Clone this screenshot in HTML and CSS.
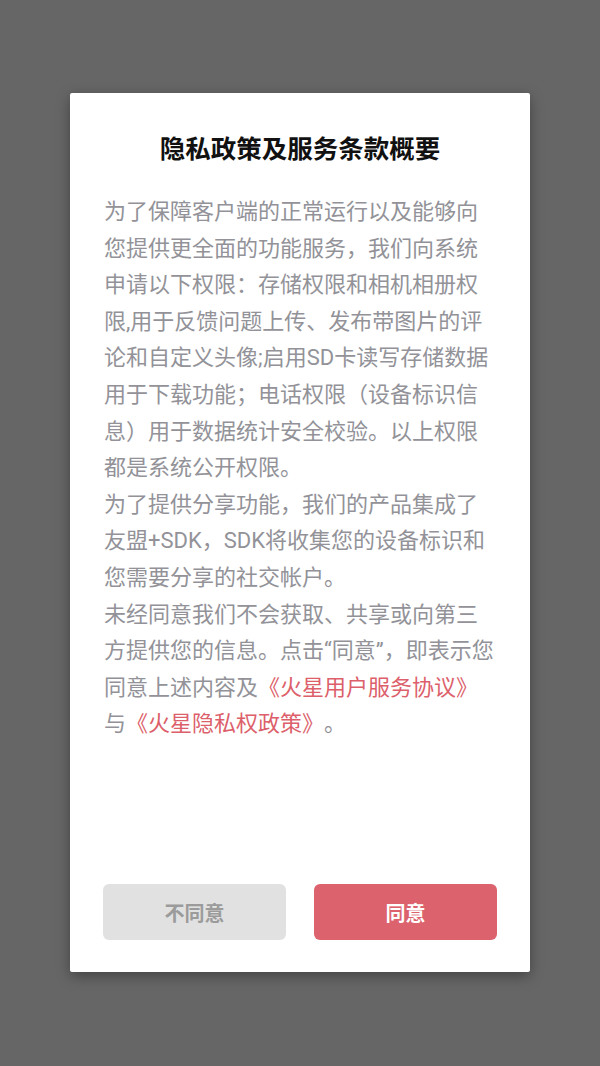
FILE: index.html
```html
<!DOCTYPE html>
<html lang="zh-CN">
<head>
<meta charset="utf-8">
<title>隐私政策及服务条款概要</title>
<link rel="stylesheet" href="styles.css">
</head>
<body>
<div class="dialog">
  <h1 class="title">隐私政策及服务条款概要</h1>
  <div class="content">
    <p>为了保障客户端的正常运行以及能够向<br>您提供更全面的功能服务，我们向系统<br>申请以下权限：存储权限和相机相册权<br>限,用于反馈问题上传、发布带图片的评<br>论和自定义头像;启用SD卡读写存储数据<br>用于下载功能；电话权限（设备标识信<br>息）用于数据统计安全校验。以上权限<br>都是系统公开权限。</p>
    <p>为了提供分享功能，我们的产品集成了<br>友盟+SDK，SDK将收集您的设备标识和<br>您需要分享的社交帐户。</p>
    <p>未经同意我们不会获取、共享或向第三<br>方提供您的信息。点击“同意”，即表示您<br>同意上述内容及<span class="link">《火星用户服务协议》</span><br>与<span class="link">《火星隐私权政策》</span>。</p>
  </div>
  <div class="actions">
    <button class="btn btn-decline">不同意</button>
    <button class="btn btn-accept">同意</button>
  </div>
</div>
</body>
</html>
```

FILE: styles.css
```css
html, body {
  margin: 0;
  padding: 0;
}
body {
  background: #666666;
  height: 1066px;
  font-family: Roboto, "Noto Sans CJK SC", sans-serif;
  padding-top: 93px;
  box-sizing: border-box;
}
.dialog {
  width: 460px;
  height: 879px;
  margin-left: 70px;
  background: #ffffff;
  border-radius: 2px;
  box-shadow: 0 4px 14px rgba(0, 0, 0, 0.35);
  display: flex;
  flex-direction: column;
  box-sizing: border-box;
  padding: 38px 0 32px;
}
.title {
  margin: 0;
  text-align: center;
  font-size: 25.5px;
  line-height: 36px;
  font-weight: 700;
  color: #111111;
  letter-spacing: 0;
}
.content {
  flex: 1;
  padding: 27px 34px 0;
  font-size: 22px;
  line-height: 36.6px;
  color: #929298;
  text-spacing-trim: space-all;
}
.content p {
  margin: 0;
  white-space: nowrap;
}
.link {
  color: #dc5f6b;
}
.actions {
  display: flex;
  gap: 28px;
  padding: 0 33px;
}
.btn {
  flex: 1;
  height: 56px;
  border: none;
  border-radius: 6px;
  font-family: Roboto, "Noto Sans CJK SC", sans-serif;
  font-size: 20px;
  font-weight: 700;
  padding: 0;
}
.btn-decline {
  background: #e1e1e1;
  color: #9b9b9b;
}
.btn-accept {
  background: #dc636e;
  color: #ffffff;
}
```
